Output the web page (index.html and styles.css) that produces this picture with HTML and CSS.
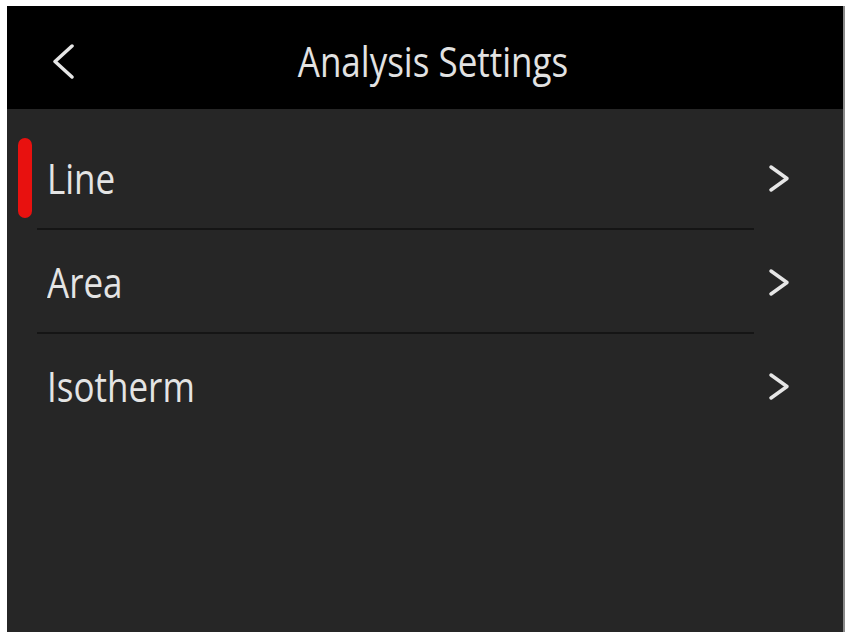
FILE: index.html
```html
<!DOCTYPE html>
<html>
	<head>
		<title>Analysis Settings</title>
		<link rel="stylesheet" href="styles.css">
	</head>
	<body>
		<div class="screen">
			<div class="header">
				<svg class="back-icon" width="23" height="35" viewBox="0 0 23 35">
					<polyline points="20,2 3,17.5 20,33" fill="none" stroke="#e6e6e6" stroke-width="3.5" stroke-linecap="round" stroke-linejoin="round"/>
				</svg>
				<p class="title">Analysis Settings</p>
			</div>
			<div class="menu">
				<div class="menu-row is-active">
					<span class="marker"></span>
					<span class="label">Line</span>
					<svg class="chevron" width="22" height="29" viewBox="0 0 22 29">
						<polyline points="3,3 19,14.5 3,26" fill="none" stroke="#e6e6e6" stroke-width="3.5" stroke-linecap="round" stroke-linejoin="round"/>
					</svg>
				</div>
				<div class="menu-row">
					<span class="marker"></span>
					<span class="label">Area</span>
					<svg class="chevron" width="22" height="29" viewBox="0 0 22 29">
						<polyline points="3,3 19,14.5 3,26" fill="none" stroke="#e6e6e6" stroke-width="3.5" stroke-linecap="round" stroke-linejoin="round"/>
					</svg>
				</div>
				<div class="menu-row no-line">
					<span class="marker"></span>
					<span class="label">Isotherm</span>
					<svg class="chevron" width="22" height="29" viewBox="0 0 22 29">
						<polyline points="3,3 19,14.5 3,26" fill="none" stroke="#e6e6e6" stroke-width="3.5" stroke-linecap="round" stroke-linejoin="round"/>
					</svg>
				</div>
			</div>
		</div>
	</body>
</html>
```

FILE: styles.css
```css
body{
	margin: 0;
	background-color: white;
	font-family: "Open Sans", "Liberation Sans", sans-serif;
}
.screen{
	margin: 6px 3px 0 7px;
	height: 626px;
	background-color: #262626;
	border-right: 2px solid #8a8a8a;
	box-sizing: border-box;
}
.header{
	height: 103px;
	background-color: black;
	display: flex;
	align-items: center;
	padding: 8px 0 0 45px;
	box-sizing: border-box;
}
.back-icon{
	flex-shrink: 0;
	margin-top: 0;
}
.title{
	flex: 1;
	margin: 0;
	padding-right: 52px;
	text-align: center;
	color: #e2e2e2;
	font-size: 35px;
	transform: scaleY(1.18);
}
.menu{
	padding: 17px 0 0 11px;
}
.menu-row{
	height: 104px;
	display: flex;
	align-items: center;
	padding-right: 53px;
	background: linear-gradient(#151515, #151515) no-repeat 19px 100% / 717px 2px;
}
.no-line{
	background: none;
}
.marker{
	width: 14px;
	height: 80px;
	border-radius: 7px;
}
.is-active .marker{
	background-color: #e8110f;
}
.label{
	margin-left: 15px;
	color: #e4e4e4;
	font-size: 35px;
	transform: scaleY(1.18);
}
.chevron{
	margin-left: auto;
}
```
